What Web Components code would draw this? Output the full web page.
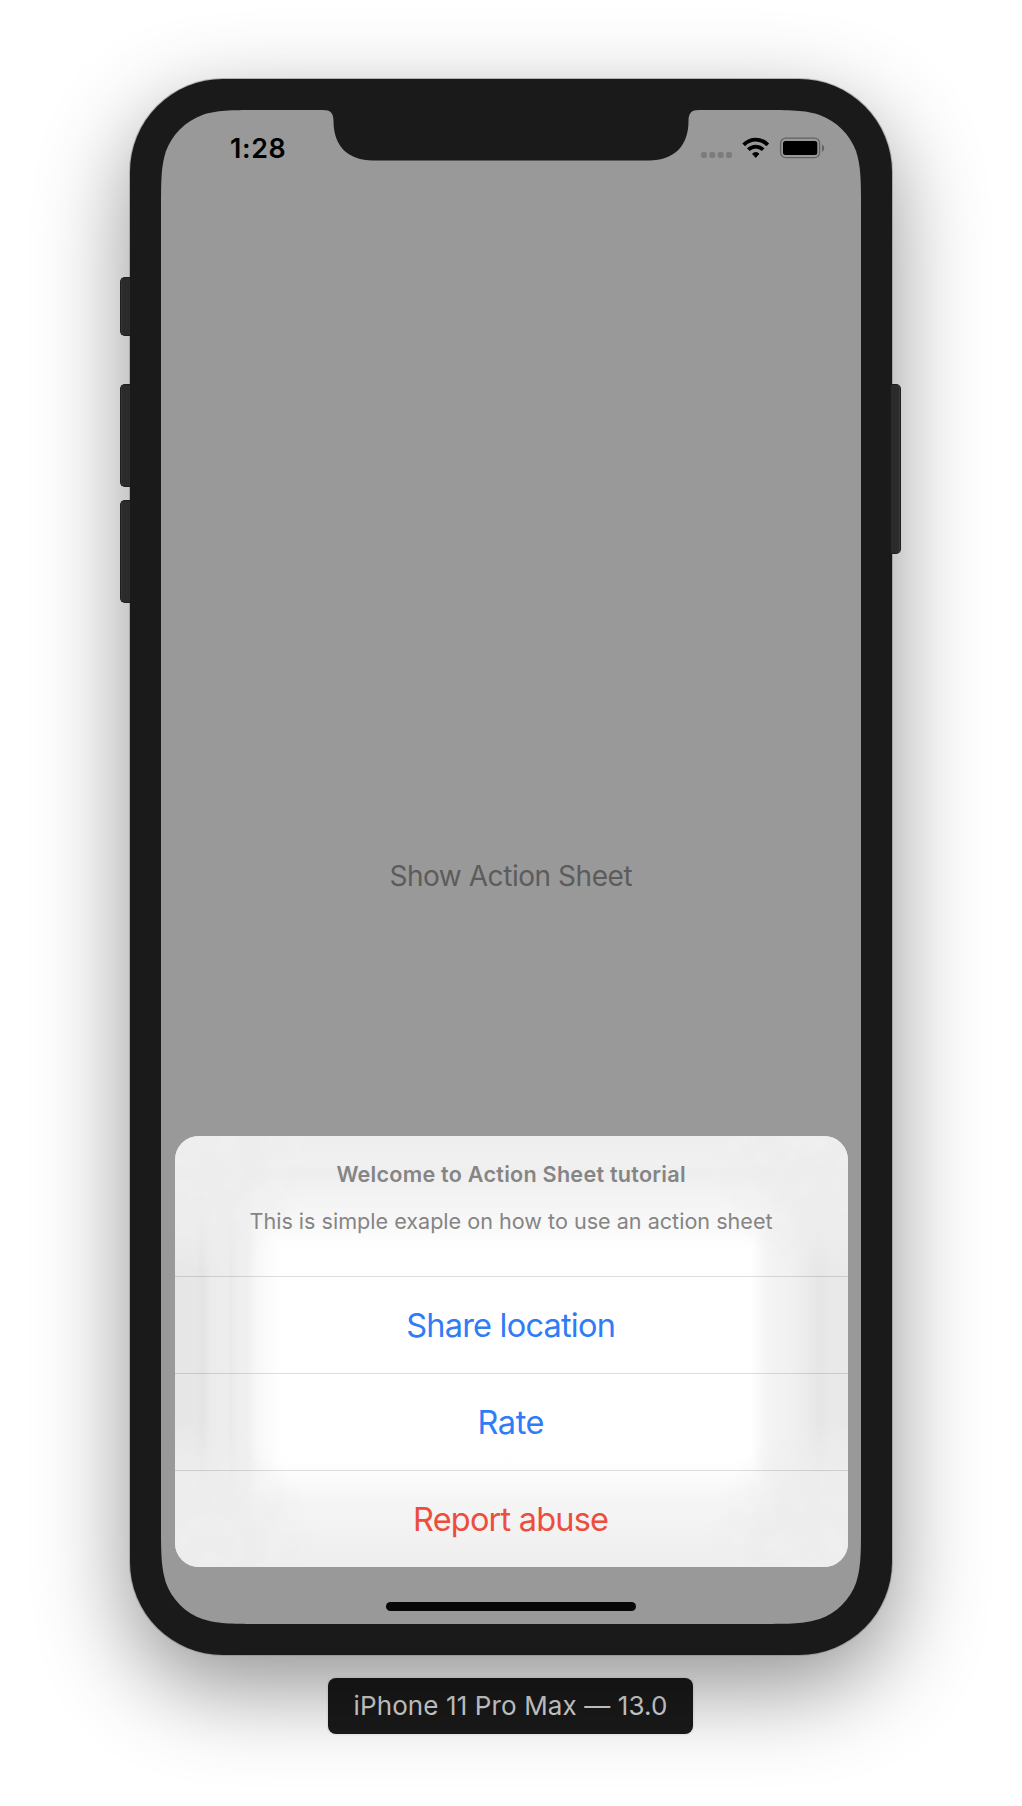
<!DOCTYPE html>
<html lang="en">
<head>
<meta charset="utf-8">
<title>Action Sheet</title>
<style>
html,body{margin:0;background:#fff}
body{width:1022px;height:1806px;overflow:hidden;font-family:Inter,"Liberation Sans",sans-serif}
</style>
</head>
<body>
<simulator-window>
  <phone-frame>
    <status-bar slot="status" time="1:28"></status-bar>
    <fit-text slot="content" ink="242" style="font-size:28px;color:#5c5c5c">Show Action Sheet</fit-text>
    <action-sheet slot="sheet">
      <fit-text slot="title" ink="348.5" style="font-weight:600">Welcome to Action Sheet tutorial</fit-text>
      <fit-text slot="message" ink="522">This is simple exaple on how to use an action sheet</fit-text>
      <sheet-action><fit-text ink="206.5">Share location</fit-text></sheet-action>
      <sheet-action><fit-text ink="64">Rate</fit-text></sheet-action>
      <sheet-action destructive><fit-text ink="193">Report abuse</fit-text></sheet-action>
    </action-sheet>
  </phone-frame>
  <device-label slot="label"><fit-text ink="311.5">iPhone 11 Pro Max — 13.0</fit-text></device-label>
</simulator-window>
<script>
class Base extends HTMLElement {
  constructor() {
    super();
    this.attachShadow({ mode: 'open' }).innerHTML = this.view();
  }
}

customElements.define('simulator-window', class extends Base {
  view() {
    return `<style>:host{display:flex;flex-direction:column;align-items:center;box-sizing:border-box;width:1022px;height:1806px;padding-top:79px;gap:23px;background:#fff}</style>
    <slot></slot><slot name="label"></slot>`;
  }
});

/* Smooth-corner rounded rectangle outline. */
function squircle(w, h, r) {
  const a = 1.52866483 * r, b = 1.08849296 * r, c = .86840694 * r, d = .63149399 * r, e = .07491139 * r, f = .37282392 * r, g = .16905899 * r;
  return `M${a} 0H${w - a}C${w - b} 0 ${w - c} 0 ${w - d} ${e}C${w - f} ${g} ${w - g} ${f} ${w - e} ${d}C${w} ${c} ${w} ${b} ${w} ${a}` +
    `V${h - a}C${w} ${h - b} ${w} ${h - c} ${w - e} ${h - d}C${w - g} ${h - f} ${w - f} ${h - g} ${w - d} ${h - e}C${w - c} ${h} ${w - b} ${h} ${w - a} ${h}` +
    `H${a}C${b} ${h} ${c} ${h} ${d} ${h - e}C${f} ${h - g} ${g} ${h - f} ${e} ${h - d}C0 ${h - c} 0 ${h - b} 0 ${h - a}` +
    `V${a}C0 ${b} 0 ${c} ${e} ${d}C${g} ${f} ${f} ${g} ${d} ${e}C${c} 0 ${b} 0 ${a} 0Z`;
}

customElements.define('phone-frame', class extends Base {
  view() {
    return `<style>
    :host{display:block;position:relative;flex:none;box-sizing:border-box;width:762px;height:1576px;padding:31px;border-radius:93px;background:#1a1a1a;
      box-shadow:0 0 0 1px rgba(135,135,135,.55),0 32px 92px rgba(0,0,0,.43)}
    .key{position:absolute;box-sizing:border-box;background:#2b2b2b;border:1px solid #1e1e1e;box-shadow:inset 1px 0 #363636}
    .l{left:-10.5px;width:10.5px;border-right:0;border-radius:5px 0 0 5px}
    .r{right:-9px;width:10px;border-left:0;border-radius:0 5px 5px 0;box-shadow:inset -1px 0 #3c3c3c}
    .screen{position:relative;display:flex;flex-direction:column;box-sizing:border-box;width:700px;height:1514px;background:#999}
    .notch{position:absolute;left:162px;top:-1px;display:block}
    .main{flex:1;display:flex;justify-content:center;align-items:flex-start;padding-top:702px}
    .bottom{display:flex;flex-direction:column;align-items:center;padding-bottom:13.5px;gap:35.5px}
    .home{width:250px;height:8.5px;border-radius:5px;background:#080808}
    </style>
    <div class="key l" style="top:198px;height:59px"></div>
    <div class="key l" style="top:305px;height:103px"></div>
    <div class="key l" style="top:421px;height:103px"></div>
    <div class="key r" style="top:305px;height:170px"></div>
    <div class="screen" style="clip-path:path('${squircle(700, 1514, 65.5)}')">
      <svg class="notch" width="376" height="53" viewBox="0 0 376 53"><path fill="#1a1a1a" d="M0 0V1C7.500 1 10.500 4 10.500 12C10.500 37 25 51.500 50 51.500H326C351 51.500 365.500 37 365.500 12C365.500 4 368.500 1 376 1V0Z"/></svg>
      <slot name="status"></slot>
      <div class="main"><slot name="content"></slot></div>
      <div class="bottom"><slot name="sheet"></slot><div class="home"></div></div>
    </div>`;
  }
});

customElements.define('status-bar', class extends Base {
  view() {
    return `<style>
    :host{display:flex;justify-content:space-between;align-items:flex-start;box-sizing:border-box;height:50px;padding:25px 36px 0 69px;color:#000}
    fit-text{font-size:26.800px;font-weight:600}
    svg{display:block;margin-top:1px}
    </style>
    <fit-text ink="53.5">${this.getAttribute('time') || ''}</fit-text>
    <svg width="125" height="24" viewBox="700 136 125 24">
      <g fill="#7c7c7c"><rect x="701" y="152" width="6" height="6" rx="2"/><rect x="709.300" y="152" width="6" height="6" rx="2"/><rect x="717.700" y="152" width="6" height="6" rx="2"/><rect x="726" y="152" width="6" height="6" rx="2"/></g>
      <g fill="none" stroke="#000" stroke-width="3.800"><path d="M743.700 144.800C750.500 137.900 761 137.900 767.800 144.800"/><path d="M748.300 149.700C752.700 145.500 758.800 145.500 763.200 149.700"/></g>
      <path d="M752.600 153.800C754.400 152.200 757.100 152.200 758.900 153.800L755.750 157.400Z" stroke="#000" stroke-width="1" stroke-linejoin="round"/>
      <rect x="780.600" y="138.200" width="39" height="19.400" rx="5" fill="none" stroke="#626262" stroke-width="1.300"/>
      <rect x="783" y="141" width="34.300" height="14" rx="2.500"/>
      <path d="M822 144.500C824.900 145.800 824.900 150.600 822 151.800Z" fill="#626262"/>
    </svg>`;
  }
});

customElements.define('action-sheet', class extends Base {
  view() {
    return `<style>
    :host{display:block;position:relative;width:673px;height:431px;border-radius:24px;overflow:hidden;
      background:
      linear-gradient(to right,#e6e6e6 0,#e7e7e7 20px,#e3e3e3 27px,#ebebeb 36px,#ededed 52px,#eaeaea 56px,#efefef 64px,#f0f0f0 73px,#f8f8f8 82px,#fff 106px,#fff 570px,#fefefe 577px,#f7f7f7 587px,#f3f3f3 597px,#f1f1f1 615px,#ededed 627px,#e6e6e6 644px,#e9e9e9 657px,#e8e8e8 100%),
      linear-gradient(#eeeeee 0,#f1f1f1 28px,#eeeeee 35px,#f3f3f3 58px,#f8f8f8 88px,#fdfdfd 104px,#fff 116px,#fff 320px,#fdfdfd 334px,#f5f5f5 366px,#eeeeee 100%);
      background-blend-mode:darken}
    .frost{position:absolute;inset:0}
    .col{position:relative;display:flex;flex-direction:column;align-items:center}
    header{display:flex;flex-direction:column;align-items:center;box-sizing:border-box;height:140px;padding-top:28px;gap:25.500px;font-size:21.600px;color:#858585}
    </style>
    <svg class="frost" width="673" height="431" aria-hidden="true">
      <defs>
        <filter id="n" x="0" y="0" width="100%" height="100%"><feTurbulence type="fractalNoise" baseFrequency=".045" numOctaves="3" seed="4"/><feColorMatrix values="0 0 0 0 .82  0 0 0 0 .82  0 0 0 0 .82  1 0 0 0 -.32"/></filter>
        <radialGradient id="g"><stop offset="0" stop-color="#fff"/><stop offset=".5" stop-color="#fff"/><stop offset="1" stop-color="#000"/></radialGradient>
        <radialGradient id="w"><stop offset="0" stop-color="#f0f0f0"/><stop offset=".6" stop-color="#efefef" stop-opacity=".85"/><stop offset="1" stop-color="#f2f2f2" stop-opacity="0"/></radialGradient>
        <mask id="m"><g fill="url(#g)"><circle r="145"/><circle cx="673" r="145"/><circle cy="431" r="150"/><circle cx="673" cy="431" r="150"/></g></mask>
      </defs>
      <g fill="url(#w)"><circle r="145"/><circle cx="673" r="145"/><circle cy="431" r="150"/><circle cx="673" cy="431" r="150"/></g>
      <g mask="url(#m)"><rect width="673" height="431" filter="url(#n)"/></g>
    </svg>
    <div class="col"><header><slot name="title"></slot><slot name="message"></slot></header><slot></slot></div>`;
  }
});

customElements.define('sheet-action', class extends Base {
  view() {
    return `<style>
    :host{display:flex;justify-content:center;align-items:center;box-sizing:border-box;width:673px;height:97px;padding-top:2.500px;border-top:1.500px solid rgba(0,0,0,.13);font-size:32.500px;color:#2f7cf6}
    :host([destructive]){color:#eb4e3d}
    </style><slot></slot>`;
  }
});

customElements.define('device-label', class extends Base {
  view() {
    return `<style>:host{display:flex;align-items:center;justify-content:center;width:365px;height:56px;margin-right:1px;border-radius:8px;background:#1a1a1a;color:#dadada;font-size:26px;font-weight:400;box-shadow:0 0 0 1.500px rgba(235,235,235,.6)}</style><slot></slot>`;
  }
});

/* One line of text tracked so that its glyphs span the `ink` width.
   Defined last: it measures with the font its ancestors set. */
customElements.define('fit-text', class extends Base {
  view() {
    return `<style>:host{display:inline-block;white-space:nowrap;line-height:1}span{display:inline-block}</style><span><slot></slot></span>`;
  }
  connectedCallback() {
    const span = this.shadowRoot.querySelector('span');
    const text = this.textContent;
    const cs = getComputedStyle(this);
    const ctx = document.createElement('canvas').getContext('2d');
    ctx.font = `${cs.fontWeight} ${cs.fontSize} ${cs.fontFamily}`;
    const m = ctx.measureText(text);
    const ink = m.actualBoundingBoxLeft + m.actualBoundingBoxRight;
    const gap = (Number(this.getAttribute('ink')) - ink) / (text.length - 1);
    span.style.letterSpacing = gap + 'px';
    span.style.marginRight = -gap + 'px';
  }
});
</script>
</body>
</html>
